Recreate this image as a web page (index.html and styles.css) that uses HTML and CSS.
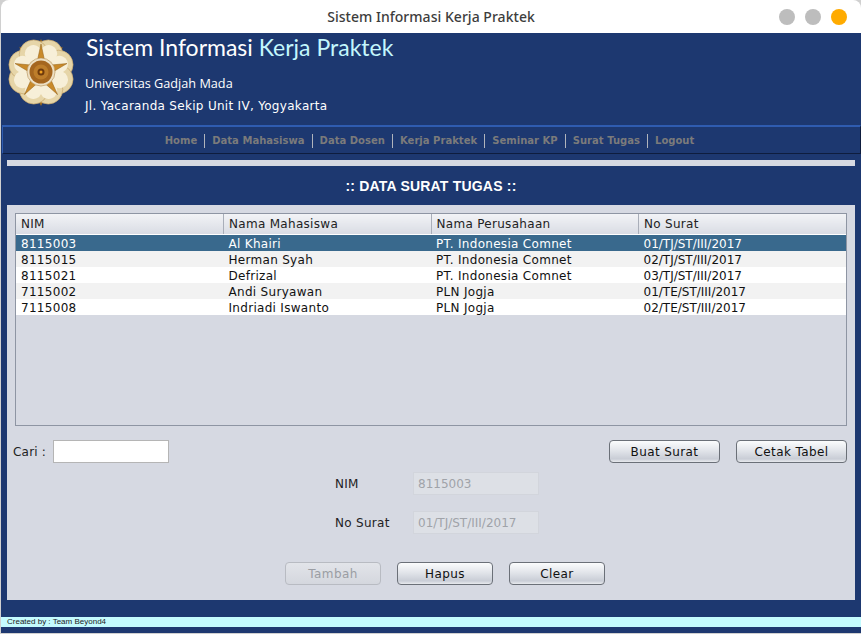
FILE: index.html
```html
<!doctype html>
<html lang="en">

<head>
	<meta charset="UTF-8" />
	<meta name="viewport" content="width=device-width, initial-scale=1.0" />
	<title>Sistem Informasi Kerja Praktek</title>
	<link rel="stylesheet" href="styles.css">
</head>

<body>
	<div class="window">
		<div class="titlebar">
			<span class="titlebar-text">Sistem Informasi Kerja Praktek</span>
			<div class="window-buttons">
				<span class="dot"></span>
				<span class="dot"></span>
				<span class="dot dot-active"></span>
			</div>
		</div>

		<div class="content">
			<header class="header">
				<svg class="logo" viewBox="0 0 68 68" width="68" height="68">
					<!-- small tips between the petals -->
					<g fill="#a06c1e">
						<path d="M34 0l4 8h-8z" />
						<path d="M34 67l-4-8h8z" />
						<path d="M34 0l4 8h-8z" transform="rotate(-40 34 33.500)" />
						<path d="M34 0l4 8h-8z" transform="rotate(40 34 33.500)" />
						<path d="M34 0l4 8h-8z" transform="rotate(-107 34 33.500)" />
						<path d="M34 0l4 8h-8z" transform="rotate(107 34 33.500)" />
					</g>
					<g fill="#e6d5a8" stroke="#c4a468" stroke-width="0.6">
						<circle cx="34" cy="14" r="14.5" transform="rotate(22.5 34 33)" />
						<circle cx="34" cy="14" r="14.5" transform="rotate(67.5 34 33)" />
						<circle cx="34" cy="14" r="14.5" transform="rotate(112.5 34 33)" />
						<circle cx="34" cy="14" r="14.5" transform="rotate(157.5 34 33)" />
						<circle cx="34" cy="14" r="14.5" transform="rotate(202.5 34 33)" />
						<circle cx="34" cy="14" r="14.5" transform="rotate(247.5 34 33)" />
						<circle cx="34" cy="14" r="14.5" transform="rotate(292.5 34 33)" />
						<circle cx="34" cy="14" r="14.5" transform="rotate(337.5 34 33)" />
					</g>
					<g fill="#f7efd8">
						<circle cx="34" cy="13" r="8.5" transform="rotate(22.5 34 33)" />
						<circle cx="34" cy="13" r="8.5" transform="rotate(67.5 34 33)" />
						<circle cx="34" cy="13" r="8.5" transform="rotate(112.5 34 33)" />
						<circle cx="34" cy="13" r="8.5" transform="rotate(157.5 34 33)" />
						<circle cx="34" cy="13" r="8.5" transform="rotate(202.5 34 33)" />
						<circle cx="34" cy="13" r="8.5" transform="rotate(247.5 34 33)" />
						<circle cx="34" cy="13" r="8.5" transform="rotate(292.5 34 33)" />
						<circle cx="34" cy="13" r="8.5" transform="rotate(337.5 34 33)" />
					</g>
					<path d="M34 5L38.700 26.500 60 24.500 41.600 35.500 50.500 55.500 34 41 17.500 55.500 26.400 35.500 8 24.500 29.300 26.500Z" fill="#c98a2a" stroke="#8f5f18" stroke-width="0.5" />
					<circle cx="34" cy="33" r="14" fill="#ede0c4" stroke="#a87f40" stroke-width="0.5" />
					<circle cx="34" cy="33" r="11.500" fill="#a5661f" />
					<circle cx="34" cy="33" r="7.500" fill="#bd7d2a" />
					<circle cx="34" cy="33" r="3.500" fill="#6e3a0c" />
					<circle cx="34" cy="33" r="1.500" fill="#f0a020" />
				</svg>
				<div class="header-text">
					<h1 class="app-name">Sistem Informasi <span class="app-name-light">Kerja Praktek</span></h1>
					<p class="campus">Universitas Gadjah Mada</p>
					<p class="address">Jl. Yacaranda Sekip Unit IV, Yogyakarta</p>
				</div>
			</header>

			<nav class="menu">
				<a>Home</a>
				<a>Data Mahasiswa</a>
				<a>Data Dosen</a>
				<a>Kerja Praktek</a>
				<a>Seminar KP</a>
				<a>Surat Tugas</a>
				<a>Logout</a>
			</nav>

			<div class="rule"></div>
			<h2 class="page-title">:: DATA SURAT TUGAS ::</h2>

			<main class="panel">
				<div class="table-box">
					<table class="data-table">
						<thead>
							<tr>
								<th>NIM</th>
								<th>Nama Mahasiswa</th>
								<th>Nama Perusahaan</th>
								<th>No Surat</th>
							</tr>
						</thead>
						<tbody>
							<tr class="selected">
								<td>8115003</td>
								<td>Al Khairi</td>
								<td>PT. Indonesia Comnet</td>
								<td class="surat">01/TJ/ST/III/2017</td>
							</tr>
							<tr class="alt">
								<td>8115015</td>
								<td>Herman Syah</td>
								<td>PT. Indonesia Comnet</td>
								<td class="surat">02/TJ/ST/III/2017</td>
							</tr>
							<tr>
								<td>8115021</td>
								<td>Defrizal</td>
								<td>PT. Indonesia Comnet</td>
								<td class="surat">03/TJ/ST/III/2017</td>
							</tr>
							<tr class="alt">
								<td>7115002</td>
								<td>Andi Suryawan</td>
								<td>PLN Jogja</td>
								<td class="surat">01/TE/ST/III/2017</td>
							</tr>
							<tr>
								<td>7115008</td>
								<td>Indriadi Iswanto</td>
								<td>PLN Jogja</td>
								<td class="surat">02/TE/ST/III/2017</td>
							</tr>
						</tbody>
					</table>
				</div>

				<div class="search-row">
					<label class="search-label" for="cari">Cari :</label>
					<input class="search-input" type="text" id="cari" />
					<div class="search-buttons">
						<button class="btn btn-wide" type="button">Buat Surat</button>
						<button class="btn btn-wide" type="button">Cetak Tabel</button>
					</div>
				</div>

				<form class="detail-form">
					<label class="field-label" for="nim">NIM</label>
					<input class="field-input" type="text" id="nim" value="8115003" disabled />
					<label class="field-label" for="nosurat">No Surat</label>
					<input class="field-input" type="text" id="nosurat" value="01/TJ/ST/III/2017" disabled />
				</form>

				<div class="actions">
					<button class="btn" type="button" disabled>Tambah</button>
					<button class="btn" type="button">Hapus</button>
					<button class="btn" type="button">Clear</button>
				</div>
			</main>

			<footer class="footer">Created by : Team Beyond4</footer>
		</div>
	</div>
</body>

</html>
```

FILE: styles.css
```css
* {
	box-sizing: border-box;
}

html,
body {
	height: 100%;
}

body {
	margin: 0;
	background-color: #d0d0d0;
	font-family: "DejaVu Sans", sans-serif;
	font-size: 12px;
	overflow: hidden;
}

.window {
	height: 633px;
	margin-left: 1px;
	display: flex;
	flex-direction: column;
	border-radius: 8px 8px 0 0;
	overflow: hidden;
}

.titlebar {
	height: 33px;
	flex: none;
	display: flex;
	align-items: center;
	justify-content: center;
	background-color: #fff;
	position: relative;
}

.titlebar-text {
	font-family: "Noto Sans", sans-serif;
	font-size: 14px;
	font-weight: 500;
	letter-spacing: 0.03px;
	color: #3d3d3d;
}

.window-buttons {
	position: absolute;
	right: 14px;
	top: 9px;
	display: flex;
	gap: 10px;
}

.dot {
	width: 16px;
	height: 16px;
	border-radius: 50%;
	background-color: #bdbdbd;
}

.dot-active {
	background-color: #ffab00;
}

.content {
	flex: 1;
	background-color: #1d3870;
	display: flex;
	flex-direction: column;
}

.header {
	height: 92px;
	flex: none;
	display: flex;
	padding: 6px 0 0 6px;
	gap: 10px;
}

.logo {
	flex: none;
}

.header-text {
	color: #fff;
}

.app-name {
	margin: -4px 0 0 1px;
	font-family: "Lato", sans-serif;
	font-size: 23px;
	font-weight: 400;
	line-height: 24px;
}

.app-name-light {
	color: #c4f7fd;
}

.campus {
	margin: 14px 0 0;
	font-family: "Open Sans", sans-serif;
	font-size: 12.7px;
	line-height: 20px;
}

.address {
	margin: 3px 0 0;
	font-size: 12px;
	line-height: 20px;
	letter-spacing: 0.3px;
}

.menu {
	height: 29px;
	flex: none;
	display: flex;
	align-items: center;
	justify-content: center;
	margin-left: 1px;
	border-top: 2px solid #2f5cb0;
	border-left: 1px solid #2f5cb0;
	border-right: 1px solid #0e1d3e;
	border-bottom: 1px solid #0e1d3e;
	padding: 1px 4px 0 0;
}

.menu a {
	font-size: 10px;
	font-weight: bold;
	letter-spacing: 0.03px;
	color: #7b7b7b;
	padding: 0 7px;
	line-height: 14px;
	border-left: 1px solid #b0b4bc;
}

.menu a:first-child {
	border-left: none;
}

.rule {
	height: 6px;
	flex: none;
	margin: 6px 6px 0;
	background-color: #d6d9e2;
}

.page-title {
	height: 39px;
	flex: none;
	margin: 0;
	font-family: "Liberation Sans", sans-serif;
	font-size: 14px;
	font-weight: bold;
	letter-spacing: 0.2px;
	line-height: 41px;
	text-align: center;
	color: #fff;
}

.panel {
	height: 395px;
	flex: none;
	margin: 0 6px;
	padding: 8px;
	background-color: #d6d9e2;
}

.table-box {
	height: 213px;
	border: 1px solid #8e95a3;
}

.data-table {
	width: 100%;
	table-layout: fixed;
	border-collapse: collapse;
}

.data-table th {
	height: 20px;
	padding: 0 0 0 5px;
	font-weight: normal;
	text-align: left;
	color: #222;
	letter-spacing: 0.3px;
	background: linear-gradient(#f2f3f6, #d9dce4);
	border-right: 1px solid #a9aeb9;
	border-bottom: 1px solid #fff;
}

.data-table th:last-child {
	border-right: none;
}

.data-table td {
	height: 16px;
	padding: 2px 0 0 5px;
	line-height: 14px;
	color: #111;
	letter-spacing: 0.3px;
	background-color: #fff;
}

.data-table td.surat {
	letter-spacing: 0;
}

.data-table .alt td {
	background-color: #f2f2f2;
}

.data-table .selected td {
	background-color: #39698d;
	color: #fff;
}

.search-row {
	display: flex;
	align-items: center;
	margin-top: 14px;
}

.search-label {
	width: 40px;
	margin-left: -2px;
	flex: none;
	letter-spacing: 0.2px;
	color: #222;
	white-space: nowrap;
}

.search-input {
	width: 116px;
	height: 23px;
	border: 1px solid #b5b5b5;
	background-color: #fff;
}

.search-buttons {
	margin-left: auto;
	display: flex;
	gap: 16px;
}

.detail-form {
	display: grid;
	grid-template-columns: 78px 126px;
	row-gap: 16px;
	align-items: center;
	margin: 9px 0 0 320px;
}

.field-label {
	color: #222;
	letter-spacing: 0.3px;
}

.field-input {
	width: 126px;
	height: 23px;
	padding: 0 0 0 4px;
	font-family: "DejaVu Sans", sans-serif;
	font-size: 12px;
	color: #a0a3a9;
	background-color: #dde0e6;
	border: 1px solid #d2d5dc;
}

.actions {
	display: flex;
	gap: 16px;
	margin: 28px 0 0 270px;
}

.btn {
	width: 96px;
	height: 23px;
	padding: 0;
	font-family: "DejaVu Sans", sans-serif;
	font-size: 12px;
	letter-spacing: 0.4px;
	color: #111;
	border: 1px solid #6b7078;
	border-radius: 4px;
	background: linear-gradient(#fbfcfd, #e2e5ea 45%, #c9cdd6 85%, #e8eaee);
}

.btn-wide {
	width: 111px;
}

.btn:disabled {
	color: #9a9da3;
	border-color: #b8bbc2;
	background: linear-gradient(#e2e4e9, #d4d7de);
}

.footer {
	height: 10px;
	flex: none;
	margin-top: 17px;
	padding-left: 6px;
	background-color: #c4fbfe;
	font-family: "Liberation Sans", sans-serif;
	font-size: 8px;
	line-height: 10px;
	color: #222;
}
```
